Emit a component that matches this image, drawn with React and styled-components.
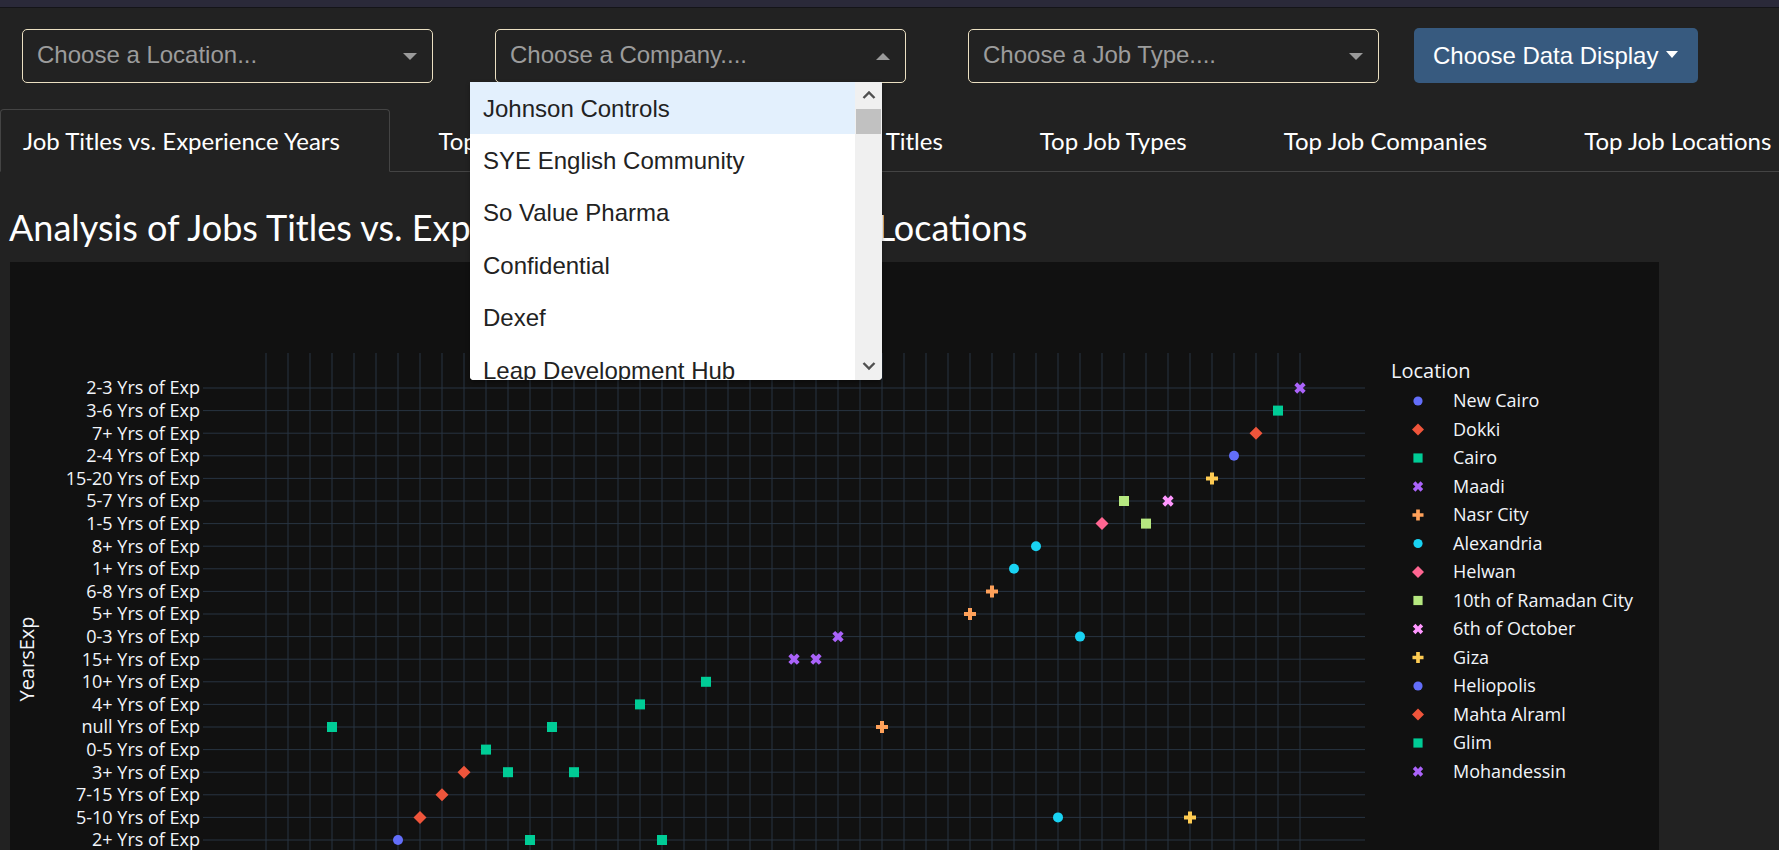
import React from "react";
import styled, { createGlobalStyle } from "styled-components";

const GlobalStyle = createGlobalStyle`
  html, body {
    margin: 0;
    padding: 0;
    background: #222;
    overflow: hidden;
  }
  body {
    font-family: "Liberation Sans", Arial, sans-serif;
  }
`;

const companies = [
  "Johnson Controls",
  "SYE English Community",
  "So Value Pharma",
  "Confidential",
  "Dexef",
  "Leap Development Hub",
];

const tabs = [
  "Job Titles vs. Experience Years",
  "Top Job Experience Years",
  "Top Job Titles",
  "Top Job Types",
  "Top Job Companies",
  "Top Job Locations",
];

const years = [
  "2-3", "3-6", "7+", "2-4", "15-20", "5-7", "1-5", "8+", "1+", "6-8", "5+",
  "0-3", "15+", "10+", "4+", "null", "0-5", "3+", "7-15", "5-10", "2+",
];

const legend = [
  { name: "New Cairo", color: "#636efa", symbol: "circle" },
  { name: "Dokki", color: "#EF553B", symbol: "diamond" },
  { name: "Cairo", color: "#00cc96", symbol: "square" },
  { name: "Maadi", color: "#ab63fa", symbol: "x" },
  { name: "Nasr City", color: "#FFA15A", symbol: "cross" },
  { name: "Alexandria", color: "#19d3f3", symbol: "circle" },
  { name: "Helwan", color: "#FF6692", symbol: "diamond" },
  { name: "10th of Ramadan City", color: "#B6E880", symbol: "square" },
  { name: "6th of October", color: "#FF97FF", symbol: "x" },
  { name: "Giza", color: "#FECB52", symbol: "cross" },
  { name: "Heliopolis", color: "#636efa", symbol: "circle" },
  { name: "Mahta Alraml", color: "#EF553B", symbol: "diamond" },
  { name: "Glim", color: "#00cc96", symbol: "square" },
  { name: "Mohandessin", color: "#ab63fa", symbol: "x" },
];

// [column, row, legend index]
const points = [
  [47, 0, 13], [46, 1, 2], [45, 2, 11], [44, 3, 10], [43, 4, 9],
  [39, 5, 7], [41, 5, 8], [38, 6, 6], [40, 6, 7], [35, 7, 5],
  [34, 8, 5], [33, 9, 4], [32, 10, 4], [37, 11, 5], [26, 11, 3],
  [24, 12, 3], [25, 12, 3], [20, 13, 12], [17, 14, 2], [28, 15, 4],
  [3, 15, 2], [13, 15, 12], [10, 16, 2], [9, 17, 1], [11, 17, 2],
  [14, 17, 12], [8, 18, 1], [7, 19, 1], [36, 19, 5], [42, 19, 9],
  [6, 20, 0], [12, 20, 2], [18, 20, 12],
];

const symbolPath = (type, r = 5) => {
  if (type === "circle") return `M${r},0A${r},${r} 0 1,1 0,-${r}A${r},${r} 0 0,1 ${r},0Z`;
  if (type === "square") return `M${r},${r}H-${r}V-${r}H${r}Z`;
  if (type === "diamond") {
    const d = r * 1.3;
    return `M${d},0L0,${d}L-${d},0L0,-${d}Z`;
  }
  if (type === "cross") {
    const a = r * 0.4;
    const b = r * 1.2;
    return `M${b},${a}H${a}V${b}H-${a}V${a}H-${b}V-${a}H-${a}V-${b}H${a}V-${a}H${b}Z`;
  }
  const t = (r * 0.8 / Math.SQRT2).toFixed(2);
  const ne = `l${t},${t}`;
  const se = `l${t},-${t}`;
  const sw = `l-${t},-${t}`;
  const nw = `l-${t},${t}`;
  return `M0,${t}${ne}${se}${sw}${se}${sw}${nw}${sw}${nw}${ne}${nw}${ne}Z`;
};

const colX = (c) => 256 + 22 * c;
const rowY = (r) => 126 + 22.6 * r;

const App = () => {
  return (
    <Page>
      <GlobalStyle />
      <TopStrip />
      <Toolbar>
        <SelectGroup>
          <SelectBox>
            <Placeholder>Choose a Location...</Placeholder>
            <Caret />
          </SelectBox>
          <SelectBox>
            <Placeholder>Choose a Company....</Placeholder>
            <Caret $up />
            <Menu>
              <MenuList>
                {companies.map((c, i) => (
                  <MenuItem key={c} $active={i === 0}>
                    {c}
                  </MenuItem>
                ))}
              </MenuList>
              <ScrollBar>
                <ScrollArrow>
                  <svg width="14" height="10" viewBox="0 0 14 10">
                    <path d="M1.5 8 L7 2.5 L12.5 8" fill="none" stroke="#505050" strokeWidth="2.4" />
                  </svg>
                </ScrollArrow>
                <ScrollThumb />
                <ScrollTrack />
                <ScrollArrow>
                  <svg width="14" height="10" viewBox="0 0 14 10">
                    <path d="M1.5 2 L7 7.5 L12.5 2" fill="none" stroke="#505050" strokeWidth="2.4" />
                  </svg>
                </ScrollArrow>
              </ScrollBar>
            </Menu>
          </SelectBox>
          <SelectBox>
            <Placeholder>Choose a Job Type....</Placeholder>
            <Caret />
          </SelectBox>
        </SelectGroup>
        <DisplayButton>
          Choose Data Display
          <ButtonCaret />
        </DisplayButton>
      </Toolbar>

      <TabBar>
        {tabs.map((t, i) => (
          <Tab key={t} $active={i === 0} $first={i === 0}>
            {t}
          </Tab>
        ))}
      </TabBar>

      <Title>Analysis of Jobs Titles vs. Experience Years in Different Locations</Title>

      <ChartCard>
        <svg width="1649" height="600" viewBox="0 0 1649 600">
          <g stroke="#283442" strokeWidth="1">
            {Array.from({ length: 48 }, (_, c) => (
              <line key={"v" + c} x1={colX(c)} x2={colX(c)} y1="91" y2="600" />
            ))}
            {years.map((_, r) => (
              <line key={"h" + r} x1="193" x2="1355" y1={rowY(r)} y2={rowY(r)} />
            ))}
          </g>
          <g fontFamily="'Open Sans', sans-serif" fontSize="18" fill="#f2f5fa">
            {years.map((y, r) => (
              <text key={y} x="190" y={rowY(r)} dy="0.36em" textAnchor="end">
                {y} Yrs of Exp
              </text>
            ))}
            <text
              x="0"
              y="0"
              fontSize="20"
              textAnchor="middle"
              transform="translate(24 397) rotate(-90)"
            >
              YearsExp
            </text>
          </g>
          {points.map(([c, r, li], i) => (
            <path
              key={i}
              d={symbolPath(legend[li].symbol)}
              fill={legend[li].color}
              transform={`translate(${colX(c)} ${rowY(r)})`}
            />
          ))}
          <g fontFamily="'Open Sans', sans-serif" fill="#f2f5fa">
            <text x="1381" y="109" dy="0.36em" fontSize="20">
              Location
            </text>
            {legend.map((l, i) => (
              <g key={l.name} transform={`translate(0 ${139 + 28.5 * i})`}>
                <path d={symbolPath(l.symbol, 4.6)} fill={l.color} transform="translate(1408 0)" />
                <text x="1443" y="0" dy="0.36em" fontSize="18">
                  {l.name}
                </text>
              </g>
            ))}
          </g>
        </svg>
      </ChartCard>
    </Page>
  );
};

export default App;

const Page = styled.div`
  width: 1779px;
  height: 850px;
  overflow: hidden;
  background: #222;
`;

const TopStrip = styled.div`
  height: 7px;
  background: #2a2939;
  border-bottom: 1px solid #141418;
`;

const Toolbar = styled.div`
  display: flex;
  align-items: center;
  padding: 20px 0 0 22px;
`;

const SelectGroup = styled.div`
  display: flex;
  gap: 62px;
`;

const SelectBox = styled.div`
  position: relative;
  box-sizing: border-box;
  width: 411px;
  height: 54px;
  display: flex;
  align-items: center;
  padding: 0 15px 1px 14px;
  border: 1px solid #ebe0c2;
  border-radius: 5px;
  background: #222;
  font: 24px "Liberation Sans", Arial, sans-serif;
  color: #9c9c9c;
`;

const Placeholder = styled.span`
  flex: 1;
  white-space: nowrap;
`;

const Caret = styled.span`
  width: 0;
  height: 0;
  border-left: 7px solid transparent;
  border-right: 7px solid transparent;
  ${(p) => (p.$up ? "border-bottom: 7px solid #9a9a9a;" : "border-top: 7px solid #9a9a9a;")}
  margin-top: 3px;
`;

const Menu = styled.div`
  position: absolute;
  top: 52px;
  left: -26px;
  z-index: 10;
  width: 412px;
  height: 298px;
  display: flex;
  overflow: hidden;
  background: #fff;
  border-radius: 0 0 4px 4px;
  box-shadow: 0 2px 4px rgba(0, 0, 0, 0.35);
`;

const MenuList = styled.div`
  flex: 1;
  overflow: hidden;
`;

const MenuItem = styled.div`
  box-sizing: border-box;
  height: 52.4px;
  display: flex;
  align-items: center;
  padding: 2px 0 0 13px;
  font: 24px "Liberation Sans", Arial, sans-serif;
  color: #222;
  white-space: nowrap;
  background: ${(p) => (p.$active ? "#e3f0fd" : "#fff")};
`;

const ScrollBar = styled.div`
  width: 27px;
  display: flex;
  flex-direction: column;
  background: #f0f0f0;
`;

const ScrollArrow = styled.div`
  height: 27px;
  display: flex;
  align-items: center;
  justify-content: center;
`;

const ScrollThumb = styled.div`
  height: 25px;
  margin: 0 1px;
  background: #c1c1c1;
`;

const ScrollTrack = styled.div`
  flex: 1;
`;

const DisplayButton = styled.div`
  box-sizing: border-box;
  height: 55px;
  margin-left: 35px;
  display: flex;
  align-items: center;
  padding: 0 20px 0 19px;
  border-radius: 5px;
  background: #375a7f;
  color: #fff;
  font: 24px "Liberation Sans", Arial, sans-serif;
  white-space: nowrap;
`;

const ButtonCaret = styled.span`
  margin-left: 8px;
  margin-top: -2px;
  width: 0;
  height: 0;
  border-left: 6px solid transparent;
  border-right: 6px solid transparent;
  border-top: 7px solid #fff;
`;

const TabBar = styled.div`
  display: flex;
  margin-top: 26px;
  height: 62px;
  border-bottom: 1px solid #444;
  white-space: nowrap;
`;

const Tab = styled.div`
  flex-shrink: 0;
  box-sizing: border-box;
  height: 63px;
  display: flex;
  align-items: center;
  padding: ${(p) => (p.$first ? "0 49px 0 22px" : "0 47.5px")};
  border: 1px solid ${(p) => (p.$active ? "#444" : "transparent")};
  border-bottom-color: ${(p) => (p.$active ? "#222" : "transparent")};
  border-radius: 4px 4px 0 0;
  background: ${(p) => (p.$active ? "#222" : "transparent")};
  color: #fff;
  font: 24px Lato, sans-serif;
`;

const Title = styled.h1`
  margin: 34px 0 13px 9px;
  font: 400 36px/43px Lato, sans-serif;
  color: #fff;
  white-space: nowrap;
`;

const ChartCard = styled.div`
  margin-left: 10px;
  width: 1649px;
  height: 600px;
  background: #111;
`;
